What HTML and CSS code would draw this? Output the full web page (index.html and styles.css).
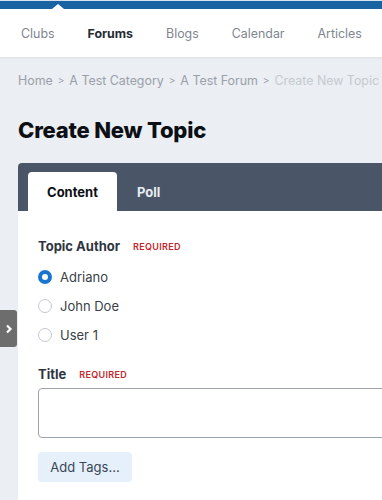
FILE: index.html
```html
<!DOCTYPE html>
<html lang="en">
<head>
    <meta charset="UTF-8">
    <meta name="viewport" content="width=device-width, initial-scale=1.0">
    <title>Create New Topic</title>
    <link rel="stylesheet" href="styles.css">
</head>
<body>
    <header class="brand-bar">
        <span class="notch"></span>
    </header>

    <nav class="main-nav">
        <a href="#" class="nav-item">Clubs</a>
        <a href="#" class="nav-item active">Forums</a>
        <a href="#" class="nav-item">Blogs</a>
        <a href="#" class="nav-item">Calendar</a>
        <a href="#" class="nav-item">Articles</a>
    </nav>

    <main class="page">
        <div class="breadcrumb">
            <a href="#">Home</a>
            <span class="sep">&gt;</span>
            <a href="#">A Test Category</a>
            <span class="sep">&gt;</span>
            <a href="#">A Test Forum</a>
            <span class="sep">&gt;</span>
            <span class="current">Create New Topic</span>
        </div>

        <h1 class="page-title">Create New Topic</h1>

        <section class="panel">
            <div class="tabs">
                <button class="tab active">Content</button>
                <button class="tab">Poll</button>
            </div>

            <form class="panel-body">
                <div class="field">
                    <div class="field-label">
                        Topic Author <span class="required">Required</span>
                    </div>
                    <div class="radios">
                        <label class="radio"><input type="radio" name="author" checked> Adriano</label>
                        <label class="radio"><input type="radio" name="author"> John Doe</label>
                        <label class="radio"><input type="radio" name="author"> User 1</label>
                    </div>
                </div>

                <div class="field">
                    <div class="field-label">
                        Title <span class="required">Required</span>
                    </div>
                    <input type="text" class="text-input">
                </div>

                <button type="button" class="btn-tags">Add Tags...</button>
            </form>
        </section>
    </main>

    <button class="sidebar-toggle" aria-label="Open sidebar">
        <svg width="8" height="10" viewBox="0 0 8 10"><path d="M2 1.5 L5.5 5 L2 8.5" fill="none" stroke="#fff" stroke-width="2.2"/></svg>
    </button>
</body>
</html>
```

FILE: styles.css
```css
* {
    margin: 0;
    padding: 0;
    box-sizing: border-box;
}

body {
    font-family: Inter, "Noto Sans", sans-serif;
    background: #ebeef2;
    color: #262b33;
    overflow: hidden;
    width: 382px;
}

a {
    text-decoration: none;
    color: inherit;
}

.brand-bar {
    height: 9px;
    border-top: 1px solid #d9e2ec;
    background: #1a63a3;
    position: relative;
}

.notch {
    position: absolute;
    left: 52px;
    bottom: 0;
    width: 0;
    height: 0;
    border-left: 6px solid transparent;
    border-right: 6px solid transparent;
    border-bottom: 5px solid #fff;
}

.main-nav {
    height: 50px;
    background: #fff;
    border-bottom: 2px solid #e3e6ea;
    display: flex;
    align-items: center;
    gap: 33px;
    padding: 1px 0 0 21px;
    white-space: nowrap;
    font-size: 12.4px;
}

.nav-item {
    color: #80868f;
}

.nav-item.active {
    color: #262b33;
    font-weight: 700;
}

.page {
    padding: 0 0 0 18px;
}

.breadcrumb {
    display: flex;
    align-items: center;
    gap: 5px;
    white-space: nowrap;
    font-size: 12.4px;
    color: #9aa0a9;
    margin-top: 12px;
    height: 18px;
}

.breadcrumb .sep {
    font-size: 10px;
}

.breadcrumb .current {
    color: #c5cad1;
}

.page-title {
    font-size: 22px;
    font-weight: 800;
    color: #0c0f14;
    margin-top: 28px;
    line-height: 26px;
    letter-spacing: -0.2px;
}

.panel {
    margin-top: 20px;
    width: 400px;
    background: #fff;
    border-radius: 4px 0 0 0;
    overflow: hidden;
}

.tabs {
    background: #4a5567;
    height: 48px;
    display: flex;
    align-items: flex-end;
    padding-left: 10px;
}

.tab {
    font-family: inherit;
    font-size: 13px;
    font-weight: 700;
    border: none;
    background: transparent;
    color: #e9edf2;
    height: 39px;
    padding: 0 19px 0 20px;
    border-radius: 4px 4px 0 0;
}

.tab.active {
    background: #fff;
    color: #0c0f14;
    width: 89px;
    padding: 0;
}

.panel-body {
    padding: 26px 0 30px 20px;
}

.field {
    margin-bottom: 21px;
}

.field:last-of-type {
    margin-bottom: 14px;
}

.field-label {
    font-size: 13px;
    font-weight: 700;
    color: #2f3540;
    line-height: 18px;
}

.required {
    color: #c0282c;
    font-size: 9px;
    font-weight: 600;
    text-transform: uppercase;
    margin-left: 10px;
    letter-spacing: 0.3px;
    vertical-align: 1px;
}

.radios {
    display: flex;
    flex-direction: column;
    gap: 11px;
    margin-top: 12px;
}

.radio {
    display: flex;
    align-items: center;
    gap: 8px;
    font-size: 13px;
    color: #3a3f48;
    height: 18px;
}

.radio input {
    appearance: none;
    width: 14px;
    height: 14px;
    border: 1px solid #c3c8d0;
    border-radius: 50%;
    background: #fff;
    margin: 0;
}

.radio input:checked {
    border: 4px solid #1a74d0;
}

.text-input {
    display: block;
    margin-top: 4px;
    width: 360px;
    height: 50px;
    border: 1px solid #9ba3ae;
    border-radius: 4px;
}

.btn-tags {
    font-family: inherit;
    font-size: 13px;
    color: #3a4656;
    background: #e5f0fa;
    border: none;
    border-radius: 4px;
    width: 94px;
    height: 30px;
}

.sidebar-toggle {
    position: absolute;
    left: 0;
    top: 310px;
    width: 17px;
    height: 37px;
    background: #6d6d6d;
    border: none;
    border-radius: 0 3px 3px 0;
    display: flex;
    align-items: center;
    justify-content: center;
}
```
